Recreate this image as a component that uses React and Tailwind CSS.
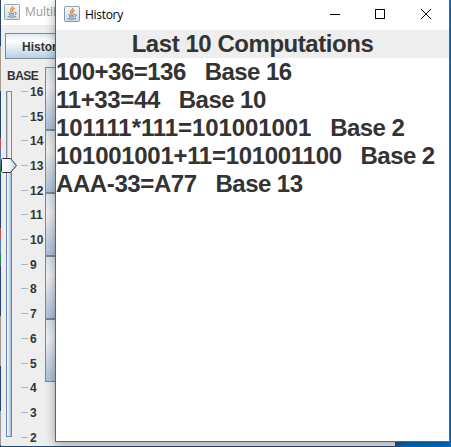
const ui = "font-['Liberation_Sans',Arial,sans-serif]";

const ticks = [16, 15, 14, 13, 12, 11, 10, 9, 8, 7, 6, 5, 4, 3, 2];

const history = [
  { text: '100+36=136', base: 'Base 16', spacing: 'tracking-[-0.5px]' },
  { text: '11+33=44', base: 'Base 10', spacing: 'tracking-[-0.35px]' },
  { text: '101111*111=101001001', base: 'Base 2', spacing: 'tracking-[-0.08px]' },
  { text: '101001001+11=101001100', base: 'Base 2', spacing: 'tracking-[-0.3px]' },
  { text: 'AAA-33=A77', base: 'Base 13', spacing: 'tracking-[-0.4px]' },
];

const keyHeights = ['h-[64px]', 'h-[63px]', 'h-[63px]', 'h-[63px]', 'h-[62px]'];

function JavaIcon({ faded }) {
  return (
    <svg width="16" height="16" viewBox="0 0 16 16" className={faded ? 'shrink-0 opacity-90' : 'shrink-0'}>
      <defs>
        <linearGradient id="cupTile" x1="0" y1="0" x2="0" y2="1">
          <stop offset="0" stopColor="#f8fafc" />
          <stop offset="1" stopColor="#cbdbe6" />
        </linearGradient>
      </defs>
      <rect x="0.5" y="0.5" width="15" height="15" rx="1" fill="url(#cupTile)" stroke="#839bab" />
      <path d="M8.8 2C9.4 4 5.8 4.7 6.5 6.5L7.6 8M10.7 4.2C8.4 5 8 6 9 7.5" fill="none" stroke="#ef7b22" strokeWidth="1.3" />
      <path d="M4.5 8.7C6 9.5 8.8 9.4 10.5 8.8M5 10.6C6.5 11.3 8.8 11.2 10 10.7M10.8 8.7C13 8.2 12.7 10.2 10.8 10.7M3.5 12C4 13.4 10.5 13.5 12 12.2" fill="none" stroke="#527891" strokeWidth="1" />
    </svg>
  );
}

function BaseSlider() {
  return (
    <div className="flex w-[44px]">
      <div className="relative mt-[7px] ml-[5px] h-[347px] w-[6px] shrink-0">
        <div className="h-[75px] w-[6px] border border-b-0 border-[#7a8a99] bg-[#eeeeee] shadow-[inset_1px_0_#b8cfe5]" />
        <div className="h-[271px] w-[6px] border border-t-0 border-[#6382bf] bg-linear-to-r from-white via-[#d4e2f0] to-[#a3b8cc]" />
        <svg width="16" height="15" viewBox="0 0 16 15" className="absolute top-[67px] -left-[5px]">
          <defs>
            <linearGradient id="thumbFill">
              <stop offset="0" stopColor="#fff" />
              <stop offset="0.5" stopColor="#f3f7fb" />
              <stop offset="1" stopColor="#b8cfe5" />
            </linearGradient>
          </defs>
          <path d="M1.5 .5H9.5L15.5 7.5L9.5 14.5H1.5L.5 13.5V1.5Z" fill="url(#thumbFill)" stroke="#333" />
        </svg>
      </div>
      <div className="-mt-[5px] ml-[9px] flex h-[370.7px] flex-col">
        {ticks.map((n) => (
          <div key={n} className="flex h-[24.714px] shrink-0 items-center">
            <span className="h-px w-[7px] bg-[#a3b8cc]" />
            <span className="ml-[2px] pt-px text-[12px] leading-[14px] font-bold text-[#333]">{n}</span>
          </div>
        ))}
      </div>
    </div>
  );
}

function CalculatorWindow() {
  return (
    <section className="absolute top-0 left-px h-[446px] w-[394px] overflow-hidden bg-[#eeeeee]">
      <header className="flex h-[25px] items-start bg-white pt-[4px] pl-[3px]">
        <JavaIcon faded />
        <span className="ml-[5px] font-['Open_Sans','Noto_Sans',sans-serif] text-[12px] leading-[16px] tracking-[-0.1px] text-[#999]">MultiBase</span>
      </header>
      <div className="mt-[8px] ml-[4px] flex h-[26px] w-[90px] items-center border border-[#7a8a99] bg-linear-to-b from-[#dde8f3] via-white via-30% to-[#b8cfe5] pt-px pl-[16px] text-[12px] font-bold text-[#333]">
        History
      </div>
      <div className="mt-[8px] flex">
        <div className="w-[44px] shrink-0">
          <div className="pt-[2px] pl-[6px] text-[12px] leading-[14px] font-bold tracking-[-0.5px] text-[#333]">BASE</div>
          <div className="mt-px">
            <BaseSlider />
          </div>
        </div>
        <div className="flex flex-col">
          {keyHeights.map((size, k) => (
            <div key={k} className={`w-[70px] border-x border-b-2 border-[#7a8a99] bg-linear-to-b from-[#dbe4ed] via-[#f0f1f2] via-30% to-[#adc3da] first:border-t last:border-b ${size}`} />
          ))}
        </div>
      </div>
    </section>
  );
}

function HistoryWindow() {
  return (
    <section className="absolute top-0 left-[55px] flex h-[442px] w-[395px] flex-col border border-t-0 border-[#1976bb] bg-white shadow-[0_2px_10px_rgba(0,0,0,0.35)]">
      <header className="flex h-[30px] shrink-0 items-center">
        <div className="ml-[8px] flex pb-[2px]">
          <JavaIcon />
        </div>
        <span className="ml-[5px] font-['Open_Sans','Noto_Sans',sans-serif] text-[12px] tracking-[-0.3px] text-black">History</span>
        <svg width="102" height="11" viewBox="0 0 102 11" className="mr-[17px] mb-[2px] ml-auto" fill="none" stroke="#000" shapeRendering="crispEdges">
          <path d="M0 5.5H10M45.5 .5H54.5V9.5H45.5Z" />
          <path d="M91 0L101 10M101 0L91 10" shapeRendering="auto" />
        </svg>
      </header>
      <h1 className="h-[28px] shrink-0 bg-[#eeeeee] text-center text-[24px] leading-[28px] font-bold tracking-[-0.45px] text-[#333]">Last 10 Computations</h1>
      <div className="text-[24px] leading-[28px] font-bold whitespace-pre text-[#333]">
        {history.map((row) => (
          <p key={row.text}>
            <span className={row.spacing}>{row.text}</span>
            <span className="tracking-[-0.4px]">{'   '}</span>
            <span className="tracking-[-0.55px]">{row.base}</span>
          </p>
        ))}
      </div>
    </section>
  );
}

export default function App() {
  return (
    <main className={`relative h-[447px] w-[451px] overflow-hidden bg-linear-to-r from-[#24466c] from-87% to-[#0070c8] to-90% ${ui}`}>
      <div className="flex h-full w-px flex-col">
        <div className="h-[46px] bg-[#24466c]" />
        <div className="h-[45px] bg-[#a79b89]" />
        <div className="h-[47px] bg-[#24466c]" />
        <div className="h-[12px] bg-[#b65555]" />
        <div className="h-[15px] bg-[#5577b6]" />
        <div className="h-[9px] bg-[#24804f]" />
        <div className="h-[54px] bg-[#24466c]" />
        <div className="h-[12px] bg-[#b65555]" />
        <div className="h-[14px] bg-[#5577b6]" />
        <div className="h-[12px] bg-[#24804f]" />
        <div className="h-[50px] bg-[#24466c]" />
        <div className="h-[50px] bg-[#a0978f]" />
        <div className="h-[45px] bg-[#24466c]" />
        <div className="h-[34px] bg-[#999]" />
      </div>
      <CalculatorWindow />
      <HistoryWindow />
    </main>
  );
}
